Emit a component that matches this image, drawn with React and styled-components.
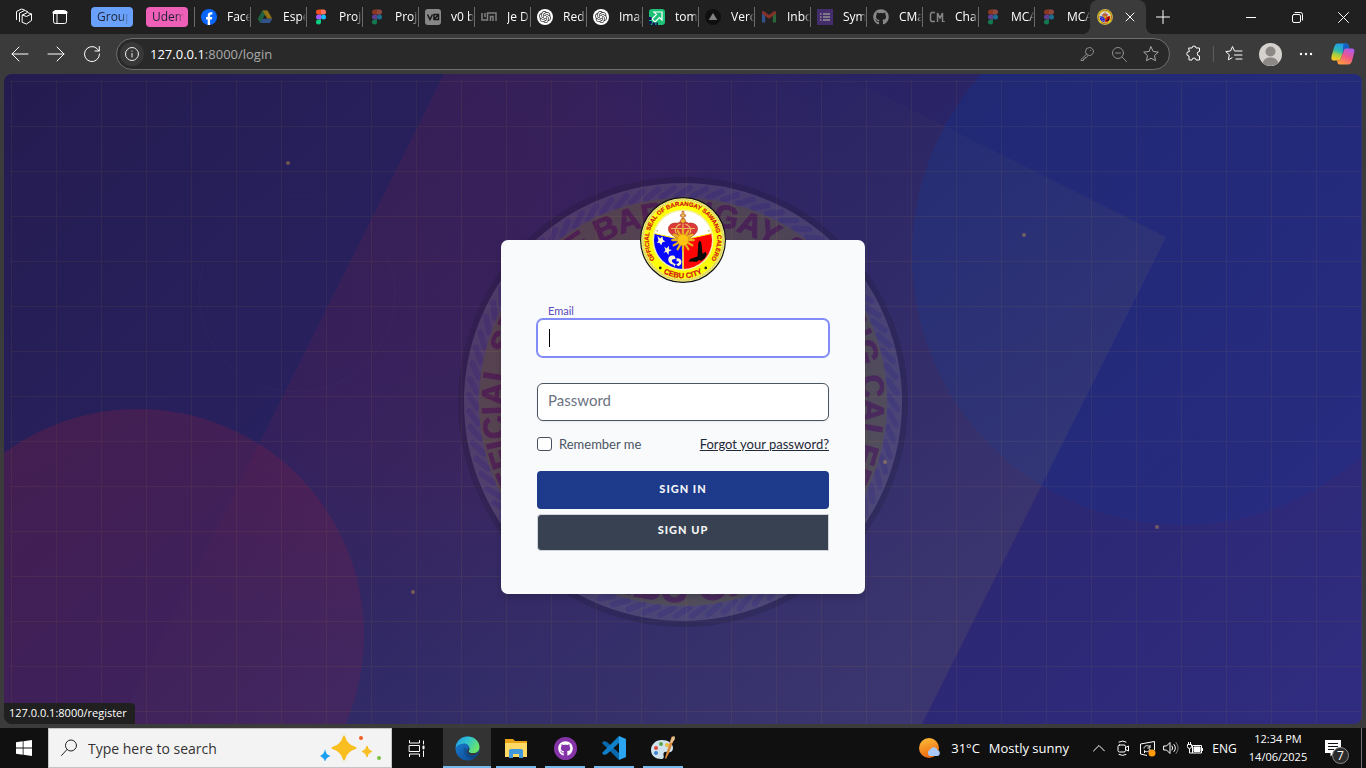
import React, { useId } from "react";
import styled, { createGlobalStyle } from "styled-components";
import { FaGithub } from "react-icons/fa";
import { SiOpenai } from "react-icons/si";

const ui = `"Open Sans", "Noto Sans", sans-serif`;
const brand = `Lato, "Open Sans", sans-serif`;

const GlobalStyle = createGlobalStyle`
  *, *::before, *::after { box-sizing: border-box; }
  body { margin: 0; background: #3b3b3b; font-family: ${ui}; }
  button { font: inherit; color: inherit; border: 0; padding: 0; background: none; cursor: pointer; }
  svg { display: block; flex: none; }
`;

const Desktop = styled.div`
  min-height: 100vh;
  display: flex;
  flex-direction: column;
  background: #3b3b3b;
`;

/* ---------- tab strip ---------- */
const TabStrip = styled.header`
  height: 34px;
  display: flex;
  align-items: center;
  padding-left: 6px;
  background: #202020;
  color: #fff;
  font-size: 12px;
  overflow: hidden;
`;

const IconButton = styled.button`
  width: ${(p) => p.$w || 36}px;
  height: 32px;
  display: flex;
  flex: none;
  align-items: center;
  justify-content: center;
  color: ${(p) => p.$color || "#fff"};
`;

const TabGroup = styled.button`
  width: 42px;
  height: 20px;
  margin-left: 13px;
  padding: 0 4px 0 6px;
  flex: none;
  border-radius: 4px;
  background: ${(p) => p.$bg};
  color: #1d2233;
  text-align: left;
`;

const Fade = styled.span`
  display: block;
  flex: 1;
  min-width: 0;
  overflow: hidden;
  white-space: nowrap;
  line-height: 18px;
  mask-image: linear-gradient(to right, #000 75%, transparent);
`;

const TabList = styled.nav`
  display: flex;
  align-items: center;
  align-self: stretch;
  margin-left: 6px;
`;

const Tab = styled.button`
  width: 56px;
  height: 20px;
  padding-left: 6px;
  display: flex;
  flex: none;
  align-items: center;
  gap: 10px;
  border-left: 1px solid #6b6b6b;
  text-align: left;
`;

const TabIcon = styled.span`
  display: flex;
  flex: none;
  width: 16px;
  height: 16px;
  opacity: ${(p) => (p.$dim ? 0.5 : 1)};
`;

const ActiveTab = styled.div`
  position: relative;
  width: 56px;
  align-self: stretch;
  display: flex;
  flex: none;
  align-items: center;
  gap: 10px;
  padding-left: 7px;
  border-radius: 8px 8px 0 0;
  background: #3b3b3b;
  &::before, &::after {
    content: "";
    position: absolute;
    bottom: 0;
    width: 8px;
    height: 8px;
  }
  &::before { right: 100%; background: radial-gradient(circle at 0 0, transparent 8px, #3b3b3b 8px); }
  &::after { left: 100%; background: radial-gradient(circle at 100% 0, transparent 8px, #3b3b3b 8px); }
`;

const Grow = styled.div`
  flex: 1;
`;

/* ---------- address bar ---------- */
const Toolbar = styled.div`
  height: 40px;
  display: flex;
  align-items: center;
  padding: 0 4px 0 2px;
  background: #3b3b3b;
`;

const AddressBar = styled.div`
  flex: 1;
  height: 32px;
  margin-left: 6px;
  margin-right: 6px;
  padding-left: 3px;
  padding-right: 2px;
  display: flex;
  align-items: center;
  border: 1px solid #6e6e6e;
  border-radius: 16px;
  background: #292929;
`;

const SiteInfo = styled.button`
  width: 24px;
  height: 24px;
  flex: none;
  display: flex;
  align-items: center;
  justify-content: center;
  border-radius: 12px;
  background: #383838;
  color: #eee;
`;

const Url = styled.div`
  flex: 1;
  padding-left: 6px;
  font-size: 13px;
  line-height: 20px;
  color: #a9a9a9;
  b { font-weight: 400; color: #fff; }
`;

const Rule = styled.span`
  width: 1px;
  height: 16px;
  margin: 0 2px 0 1px;
  background: #5c5c5c;
`;

/* ---------- page ---------- */
const Stage = styled.main`
  position: relative;
  flex: 1;
  display: flex;
  align-items: center;
  justify-content: center;
  margin: 0 4px 4px;
  padding: 20px 16px 28px;
  border-radius: 8px;
  overflow: hidden;
  background: linear-gradient(135deg, #241c50, #302c80);
`;

const Backdrop = styled.svg`
  position: absolute;
  inset: 0;
  width: 100%;
  height: 100%;
`;

const LoginPanel = styled.div`
  position: relative;
  width: 364px;
  display: flex;
  flex-direction: column;
  align-items: center;
`;

const SealSlot = styled.div`
  position: relative;
  z-index: 1;
  margin-bottom: -43px;
`;

const Card = styled.form`
  width: 100%;
  padding: 63px 36px 43px;
  display: flex;
  flex-direction: column;
  border-radius: 7px;
  background: #f9fafb;
  box-shadow: 0 4px 6px rgba(0, 0, 0, 0.15);
  font-family: ${brand};
`;

const FieldLabel = styled.label`
  padding-left: 11px;
  font-size: 11px;
  line-height: 16px;
  color: #5a4bbd;
`;

const TextField = styled.input`
  width: 100%;
  height: 38px;
  padding: 0 10px 4px;
  border: 1px solid #4b5563;
  border-radius: 6px;
  outline: 0;
  background: #fff;
  font-family: ${brand};
  font-size: 15px;
  color: #111827;
  box-shadow: 0 1px 2px rgba(0, 0, 0, 0.08);
  &::placeholder { color: #6b7280; opacity: 1; }
`;

const ActiveField = styled(TextField)`
  border-color: #818cf8;
  box-shadow: 0 0 0 1px #818cf8;
  margin-bottom: 26px;
  caret-color: transparent;
  background: #fff linear-gradient(#000, #000) 11px 9px / 1px 18px no-repeat;
`;

const OptionsRow = styled.div`
  display: flex;
  align-items: center;
  justify-content: space-between;
  height: 24px;
  margin: 11px 0 15px;
  font-size: 13px;
  color: #4b5563;
`;

const Remember = styled.label`
  display: flex;
  align-items: center;
  gap: 7px;
`;

const TickBox = styled.input`
  appearance: none;
  width: 15px;
  height: 14px;
  margin: 0;
  border: 1px solid #475060;
  border-radius: 3px;
  background: #fff;
`;

const TextLink = styled.a`
  color: #1f2937;
`;

const ActionButton = styled.button`
  height: ${(p) => (p.$secondary ? 37 : 38)}px;
  margin-top: ${(p) => (p.$secondary ? 5 : 0)}px;
  padding-bottom: ${(p) => (p.$secondary ? 5 : 2)}px;
  border: ${(p) => (p.$secondary ? "1px solid #d1d5db" : "0")};
  border-radius: ${(p) => (p.$secondary ? "4px 0 0 4px" : "4px")};
  background: ${(p) => (p.$secondary ? "#374151" : "#1e3a8a")};
  color: #f3f4f6;
  font-size: 11px;
  font-weight: 900;
  letter-spacing: 1px;
  text-transform: uppercase;
`;

const StatusBubble = styled.div`
  position: absolute;
  left: 0;
  bottom: 0;
  width: 131px;
  height: 21px;
  padding-left: 5px;
  border-top-right-radius: 4px;
  background: #202020;
  color: #fff;
  font-size: 11px;
  line-height: 20px;
  white-space: nowrap;
`;

/* ---------- taskbar ---------- */
const Taskbar = styled.footer`
  height: 40px;
  display: flex;
  align-items: center;
  background: #101010;
  color: #fff;
`;

const TaskTile = styled.button`
  position: relative;
  width: 48px;
  height: 40px;
  flex: none;
  display: flex;
  align-items: center;
  justify-content: center;
  background: ${(p) => (p.$active ? "#333" : "transparent")};
  &::after {
    content: "";
    position: absolute;
    bottom: 0;
    left: ${(p) => (p.$active ? 0 : 4)}px;
    right: ${(p) => (p.$active ? 0 : 4)}px;
    height: 2px;
    background: ${(p) => (p.$running ? "#76b9ed" : "transparent")};
  }
`;

const AppRow = styled.div`
  display: flex;
  gap: 1px;
  margin-left: 3px;
`;

const SearchBox = styled.label`
  width: 344px;
  height: 40px;
  flex: none;
  display: flex;
  align-items: center;
  gap: 10px;
  padding: 0 9px 0 11px;
  border: 1px solid #c4c4c4;
  background: #f3f3f3;
  color: #222;
`;

const SearchInput = styled.input`
  flex: 1;
  min-width: 0;
  padding: 0;
  border: 0;
  outline: 0;
  background: none;
  font-family: ${ui};
  font-size: 14px;
  &::placeholder { color: #333; opacity: 1; }
`;

const Weather = styled.button`
  display: flex;
  align-items: center;
  gap: 9px;
  margin-right: 18px;
  font-size: 13px;
  white-space: nowrap;
`;

const TrayText = styled.span`
  width: 35px;
  text-align: center;
  font-size: 12px;
`;

const Clock = styled.time`
  width: 72px;
  text-align: center;
  font-size: 11px;
  line-height: 18px;
`;

const Notifications = styled.button`
  position: relative;
  width: 38px;
  height: 40px;
  display: flex;
  align-items: center;
  justify-content: center;
  margin-right: 9px;
`;

const Badge = styled.span`
  position: absolute;
  left: 18px;
  top: 19px;
  width: 17px;
  height: 17px;
  border: 1px solid #8a8a8a;
  border-radius: 9px;
  background: #2c2c2c;
  font-size: 12px;
  line-height: 15px;
  text-align: center;
`;

const PeekEdge = styled.span`
  width: 5px;
  height: 40px;
  border-left: 1px solid #707070;
`;

/* ---------- drawings ---------- */
const strands = Array.from({ length: 84 }, (_, i) => (i * 360) / 84);

function Seal({ size, rope = "#f3ee8c", stripe = "#dcd450", ...rest }) {
  const id = useId();
  return (
    <svg width={size} height={size} viewBox="-225 -225 450 450" aria-label="Barangay seal" {...rest}>
      <defs>
        <path id={id + "t"} d="M0 179 A179 179 0 0 1 0 -179 A179 179 0 0 1 0 179" />
        <path id={id + "b"} d="M-200 0 A200 200 0 0 0 200 0" />
        <clipPath id={id + "c"}><circle r="152" /></clipPath>
      </defs>
      <circle r="222" fill={rope} stroke="#101010" strokeWidth="6" />
      <g stroke={stripe} strokeWidth="6" strokeLinecap="round">
        {strands.map((a) => (
          <line key={a} x1="-6" y1="-206" x2="7" y2="-214" transform={`rotate(${a})`} />
        ))}
      </g>
      <circle r="204" fill="#ffff0a" />
      <g fontFamily="Liberation Sans, Arial, sans-serif" fontWeight="700" fill="#d01515" stroke="#d01515" strokeWidth="1" textAnchor="middle">
        <text fontSize="32"><textPath href={"#" + id + "t"} startOffset="50%">OFFICIAL SEAL OF BARANGAY SAWANG CALERO</textPath></text>
        <text fontSize="40"><textPath href={"#" + id + "b"} startOffset="50%">CEBU CITY</textPath></text>
      </g>
      <circle cx="-119" cy="146" r="7" fill="#222" />
      <circle cx="119" cy="146" r="7" fill="#222" />
      <circle r="160" fill="#f4f0a0" />
      <circle r="152" fill="#fff" />
      <g clipPath={`url(#${id}c)`}>
        <path d="M-160 -36 L-3 0 V160 H-160Z" fill="#0808ff" />
        <path d="M160 -36 L3 0 V160 H160Z" fill="#ff0505" />
        <path d="M-160 -36 L0 0 L160 -36 M0 0 V160" fill="none" stroke="#ffe600" strokeWidth="6" />
        <path d="M28 112 L40 98 L76 86 L80 14 L88 2 L96 14 L102 72 L118 62 L124 76 L114 96 L98 108 L84 104 L72 114Z" fill="#0a0a0a" />
        <g fill="#fff8c8">
          <path d="M-134 -22 L-120 -8 L-108 -18 L-104 0 L-92 8 L-108 12 L-114 28 L-124 14 L-136 16 L-128 2Z" />
          <path d="M-98 34 L-86 44 L-74 30 L-74 48 L-58 52 L-74 60 L-76 78 L-88 62 L-102 68 L-92 54Z" />
          <path d="M-44 84 C-84 70 -90 124 -50 130 L-46 140 L-38 126 C-64 120 -66 96 -38 100Z" />
          <path d="M-34 96 C-2 92 0 130 -26 138 L-36 126 C-16 122 -16 110 -34 112Z" />
        </g>
      </g>
      <g stroke="#a3301c" strokeWidth="3">
        <path d="M-44 -18 C-100 -48 -76 -96 -28 -88 C-14 -100 14 -100 28 -88 C76 -96 100 -48 44 -18Z" fill="#dc3a3a" />
        <path d="M-26 -22 C-54 -50 -36 -76 -12 -84 M26 -22 C54 -50 36 -76 12 -84 M0 -22 V-88 M-62 -60 H62" fill="none" stroke="#e8b860" strokeWidth="6" />
        <path d="M-46 -34 Q0 -14 46 -34 L40 -12 Q0 6 -40 -12Z" fill="#eab82c" />
        <circle cy="-100" r="13" fill="#f0b72a" />
        <path d="M-5 -112 V-124 H-14 V-132 H-5 V-150 H5 V-132 H14 V-124 H5 V-112Z" fill="#f0c84a" />
      </g>
      <g stroke="#e8b020" strokeWidth="12" strokeLinecap="round">
        {[0, 30, 60, 90, 120, 150, 180, 210, 240, 270, 300, 330].map((a) => (
          <line key={a} x1="0" y1="-28" x2="0" y2="-56" transform={`rotate(${a})`} />
        ))}
      </g>
      <circle r="30" fill="#ffc313" stroke="#d98f10" strokeWidth="3" />
      <circle cx="-135" cy="-48" r="5" fill="#c9c27a" />
      <circle cx="135" cy="-48" r="5" fill="#c9c27a" />
    </svg>
  );
}

function PageArt() {
  return (
    <Backdrop viewBox="0 0 1358 650" preserveAspectRatio="xMidYMid slice" aria-hidden="true">
      <defs>
        <radialGradient id="bandRed" gradientUnits="userSpaceOnUse" cx="430" cy="180" r="420">
          <stop offset="0" stopColor="#a01c38" stopOpacity=".14" />
          <stop offset=".5" stopColor="#a01c40" stopOpacity=".12" />
          <stop offset="1" stopColor="#902050" stopOpacity="0" />
        </radialGradient>
        <linearGradient id="bandGold" gradientUnits="userSpaceOnUse" x1="680" y1="50" x2="1020" y2="500">
          <stop offset="0" stopColor="#c8b840" stopOpacity="0" />
          <stop offset="1" stopColor="#c8b840" stopOpacity=".09" />
        </linearGradient>
        <linearGradient id="ruby" x1="0" y1="0" x2=".6" y2="1">
          <stop offset="0" stopColor="#b01c30" stopOpacity=".22" />
          <stop offset="1" stopColor="#901848" stopOpacity=".18" />
        </linearGradient>
        <linearGradient id="azure" x1="0" y1="0" x2=".8" y2="1">
          <stop offset="0" stopColor="#0a3898" stopOpacity=".3" />
          <stop offset="1" stopColor="#0a329c" stopOpacity=".18" />
        </linearGradient>
        <pattern id="grid" x="7" y="7" width="45" height="45" patternUnits="userSpaceOnUse">
          <path d="M45 0 H0 V45" fill="none" stroke="#facc15" strokeOpacity=".06" strokeWidth="2" />
        </pattern>
      </defs>
      <circle cx="1178" cy="181" r="270" fill="url(#azure)" />
      <path d="M440 0 H836 L1162 163 L918 650 H115Z" fill="url(#bandRed)" />
      <path d="M440 0 H836 L1162 163 L918 650 H115Z" fill="url(#bandGold)" />
      <circle cx="134" cy="561" r="226" fill="url(#ruby)" />
      <circle cx="293" cy="220" r="98" fill="none" stroke="#6a5a80" strokeOpacity=".08" />
      <rect x="6" y="6" width="1352" height="644" fill="url(#grid)" />
      <Seal size={450} x="454" y="103" rope="#d8d4c0" stripe="#9c94d8" opacity=".14" />
      <g fill="#d9a84a" fillOpacity=".4">
        <circle cx="284" cy="89" r="2" />
        <circle cx="1020" cy="161" r="2" />
        <circle cx="881" cy="388" r="2" />
        <circle cx="1153" cy="453" r="2" />
        <circle cx="409" cy="518" r="2" />
      </g>
    </Backdrop>
  );
}

const Line = ({ size = 16, w = 1, children, box = 16 }) => (
  <svg width={size} height={size} viewBox={`0 0 ${box} ${box}`} fill="none" stroke="currentColor" strokeWidth={w} strokeLinecap="round" strokeLinejoin="round">
    {children}
  </svg>
);

const FacebookIcon = () => (
  <svg width="16" height="16" viewBox="0 0 16 16"><circle cx="8" cy="8" r="8" fill="#0866ff" /><path d="M6.700 16V10.400H5V8h1.700V6.900C6.700 4.300 7.900 3.200 10 3.200c.5 0 1 .05 1.400.15v2.150h-.9c-1 0-1.400.5-1.400 1.500V8h2.200l-.4 2.400H9.100V16z" fill="#fff" /></svg>
);
const DriveIcon = () => (
  <svg width="16" height="16" viewBox="0 0 16 16"><path d="M5.500 1.500h5L8 5.800 3.200 14 .7 9.700z" fill="#1ea362" /><path d="M5.500 1.500h5l4.800 8.200h-5z" fill="#ffc107" /><path d="M5.600 9.700h9.700L12.800 14H3.200z" fill="#4285f4" /></svg>
);
const FigmaIcon = () => (
  <svg width="16" height="16" viewBox="0 0 16 16"><path d="M8 .5H5.500a2.500 2.500 0 0 0 0 5H8z" fill="#f24e1e" /><path d="M8 .5h2.500a2.500 2.500 0 0 1 0 5H8z" fill="#ff7262" /><path d="M8 5.500H5.500a2.500 2.500 0 0 0 0 5H8z" fill="#a259ff" /><circle cx="10.500" cy="8" r="2.500" fill="#1abcfe" /><path d="M8 10.500H5.500A2.500 2.500 0 1 0 8 13z" fill="#0acf83" /></svg>
);
const V0Icon = () => (
  <svg width="16" height="16" viewBox="0 0 16 16"><rect width="16" height="16" rx="3" fill="#eee" /><path d="M2.500 5.500 5 10.500 7.500 5.500M9 5.500h4.500v5H9zM9 10.500l4.500-5" fill="none" stroke="#111" strokeWidth="1.500" /></svg>
);
const MazeIcon = () => (
  <svg width="16" height="16" viewBox="0 0 16 16"><path d="M1 4v7h5.500V4h8.500v8M4 4v4M9.500 12V7.500H12V12" fill="none" stroke="#ddd" strokeWidth="1.500" /></svg>
);
const OpenAiIcon = () => (
  <svg width="16" height="16" viewBox="0 0 16 16"><circle cx="8" cy="8" r="8" fill="#fff" /><SiOpenai x="2" y="2" size={12} color="#333" /></svg>
);
const TomaIcon = () => (
  <svg width="16" height="16" viewBox="0 0 16 16"><rect width="16" height="16" rx="3" fill="#1cc077" /><path d="M5 3h8v8l-2.500-2.500L6 13l-3-3 4.500-4.500z" fill="#1cc077" stroke="#fff" strokeWidth="1.200" /><path d="M1 8v4a3 3 0 0 0 3 3h5" fill="none" stroke="#10105e" strokeWidth="3" strokeDasharray="3 1" /></svg>
);
const VercelIcon = () => (
  <svg width="16" height="16" viewBox="0 0 16 16"><circle cx="8" cy="8" r="8" fill="#000" /><path d="M8 4l4.300 7H3.700z" fill="#ddd" /></svg>
);
const GmailIcon = () => (
  <svg width="16" height="16" viewBox="0 0 16 16"><path d="M1 13.500V4l3.200 2.400v7.100z" fill="#4285f4" /><path d="M11.800 13.500V6.400L15 4v9.500z" fill="#34a853" /><path d="M1 4.500V3.600c0-1.300 1.400-1.900 2.300-1.200L8 6l4.700-3.600c.9-.7 2.300-.1 2.300 1.200v.9L8 9.800z" fill="#ea4335" /></svg>
);
const ListIcon = () => (
  <svg width="16" height="16" viewBox="0 0 16 16"><rect width="16" height="16" fill="#673ab7" /><path d="M3 5h1.500M3 8h1.500M3 11h1.500M6 5h7M6 8h7M6 11h7" stroke="#fff" strokeWidth="1.500" /></svg>
);
const CmIcon = () => (
  <svg width="16" height="16" viewBox="0 0 16 16"><path d="M6 3.500H2.500L1.500 5v6l1 1.500H6M8.500 13V4l2.500 5 2.500-5v9M15 12v1" fill="none" stroke="#e8e8e8" strokeWidth="1.500" /></svg>
);

const tabs = [
  ["Facebook", FacebookIcon, false],
  ["Especial", DriveIcon, true],
  ["Project", FigmaIcon, false],
  ["Project", FigmaIcon, true],
  ["v0 by V", V0Icon, true],
  ["Je Doc", MazeIcon, true],
  ["Reduce", OpenAiIcon, false],
  ["Image", OpenAiIcon, false],
  ["toma", TomaIcon, false],
  ["Vercel", VercelIcon, true],
  ["Inbox", GmailIcon, true],
  ["Sym", ListIcon, true],
  ["CMa", () => <FaGithub size={16} color="#eee" />, true],
  ["Chan", CmIcon, true],
  ["MCA", FigmaIcon, true],
  ["MCA", FigmaIcon, true],
];

const EdgeIcon = () => (
  <svg width="25" height="25" viewBox="0 0 25 25">
    <defs>
      <linearGradient id="eA" x1="0" y1="0" x2="1" y2=".5"><stop offset="0" stopColor="#2299e0" /><stop offset=".5" stopColor="#2fc3d0" /><stop offset="1" stopColor="#6be36a" /></linearGradient>
      <linearGradient id="eB" x1="0" y1="0" x2="1" y2="1"><stop offset="0" stopColor="#1a85d8" /><stop offset="1" stopColor="#0c3f87" /></linearGradient>
    </defs>
    <circle cx="12.500" cy="12.500" r="12" fill="url(#eB)" />
    <path d="M.6 11.500C1.500 5 6.500.5 12.500.5c7 0 12 5 12 10.500 0 4.300-3 6.300-6.500 6.300-3.200 0-4.500-1.300-4.500-2.100 0-.7 1-1.200 1-3 0-2.400-2.200-4.700-5.600-4.700-4 0-7 2.300-8.300 4z" fill="url(#eA)" />
    <path d="M9.500 11.500c-2.500 4.500.5 10.500 7 10.500 2.500 0 4.700-1 6-2-1 .2-9 1-9-5z" fill="#101a2c" fillOpacity=".2" />
    <path d="M13.500 15.200c0 .8 1.300 2.100 4.500 2.100 2.300 0 4.300-.8 5.500-2.400-.8 2.600-2.800 4.200-5.500 4.400-4 .2-6-3-5.500-5.600.5-1.500 2-1.500 2-1.500 0 1.800-1 2.300-1 3z" fill="#333" />
  </svg>
);
const FolderIcon = () => (
  <svg width="22" height="20" viewBox="0 0 22 20"><path d="M0 1h8l2 2h12v16H0z" fill="#e8a317" /><path d="M0 5h22v14H0z" fill="#ffd966" /><path d="M4 20v-7c0-1 .6-2 2-2h10c1.400 0 2 1 2 2v7h-4v-4H8v4z" fill="#3f97dc" /></svg>
);
const GithubDesktopIcon = () => (
  <svg width="23" height="23" viewBox="0 0 23 23"><circle cx="11.500" cy="11.500" r="11.500" fill="#8534a8" /><FaGithub x="4" y="4" size={15} color="#fff" /></svg>
);
const VscodeIcon = () => (
  <svg width="24" height="24" viewBox="0 0 24 24"><path d="M0 7l2-2 3 1 13 12-1 6z" fill="#0969ac" /><path d="M17 0l1 6L5 18l-3 1-2-2z" fill="#0f7fc9" /><path d="M17 0l7 3v18l-7 3z" fill="#2ca5f0" /></svg>
);
const PaintIcon = () => (
  <svg width="26" height="26" viewBox="0 0 26 26"><path d="M12 5C5 5 1 10 1 15c0 6 5 9 10 9 3 0 3-2 2.500-4C13 17 15 16 18 17c3 .8 5-1 5-4 0-5-5-8-11-8z" fill="#cfe3ee" /><circle cx="6" cy="13" r="2" fill="#e2473a" /><circle cx="11" cy="9" r="2" fill="#5aa84a" /><circle cx="17" cy="10" r="2" fill="#f0b932" /><circle cx="6" cy="18" r="2" fill="#3d82d0" /><path d="M22 1l2 3-5 14-3 6-1-1 2-7z" fill="#d9893c" /><path d="M20 7l2-5 2.500-1 .5 3-3 4z" fill="#e8c08c" /></svg>
);
const CopilotIcon = () => (
  <svg width="24" height="22" viewBox="0 0 24 22">
    <defs>
      <linearGradient id="cA" x1=".6" y1="0" x2=".3" y2="1"><stop offset="0" stopColor="#1c9cf0" /><stop offset=".45" stopColor="#2fb8b0" /><stop offset=".7" stopColor="#a8d040" /><stop offset="1" stopColor="#ffc81e" /></linearGradient>
      <linearGradient id="cB" x1=".8" y1="0" x2=".3" y2="1"><stop offset="0" stopColor="#a95af0" /><stop offset=".5" stopColor="#f0568a" /><stop offset="1" stopColor="#ff9a3c" /></linearGradient>
    </defs>
    <path d="M7 .5h8c2 0 2.700 1.500 3.300 5h-2.800c-2 0-2.500 1-3 2.500l-2.700 7.500c-.5 1.300-1.300 2-3.200 2H3C.5 17.500 0 15.500.6 13L3.200 4C4 1.500 5 .5 7 .5z" fill="url(#cA)" />
    <path d="M12.500.5H15c2 0 2.700 1.500 3.300 5h-2.800c-2 0-2.500 1-3 2.500l-1 2.500z" fill="#1460c4" />
    <path d="M17 21.500H9c-1.800 0-2.500-1-3-4 2.500 0 3.500-.8 4-2.500l2.700-7c.6-2 1.300-2.500 2.800-2.500h5c2.800 0 3.300 2 2.700 4L21 18c-.6 2.300-1.800 3.500-4 3.500z" fill="url(#cB)" />
  </svg>
);

const star = "M9 1.800l2.200 4.700 5.100.6-3.800 3.500 1 5.100L9 13.200l-4.500 2.500 1-5.100L1.700 7.100l5.100-.6z";

const runningApps = [
  ["Browser", EdgeIcon],
  ["File Explorer", FolderIcon],
  ["GitHub Desktop", GithubDesktopIcon],
  ["Code editor", VscodeIcon],
  ["Paint", PaintIcon],
];

export default function App() {
  return (
    <Desktop>
      <GlobalStyle />
      <TabStrip>
        <IconButton aria-label="Workspaces">
          <Line size={18} box={18}><path d="M7.500 7l5-2.500L16.500 6v6.500l-5 3.500-4-1.500zM7.500 7l4 1.500 5-2.500M4.500 13.500V5l5-2.500 3 1M1.500 11.500V3.500L6.500 1l3 1" /></Line>
        </IconButton>
        <IconButton aria-label="Tab actions">
          <Line size={16}><rect x="1.500" y="1.500" width="13" height="13" rx="2" /><path d="M2 3.500h12" strokeWidth="3" /><path d="M5 5v9" /></Line>
        </IconButton>
        <TabGroup $bg="#69a1fa"><Fade>Group</Fade></TabGroup>
        <TabGroup $bg="#ee5fb7"><Fade>Udemy</Fade></TabGroup>
        <TabList>
          {tabs.map(([name, Icon, dim], i) => (
            <Tab key={i}>
              <TabIcon $dim={dim}><Icon /></TabIcon>
              <Fade>{name}</Fade>
            </Tab>
          ))}
          <ActiveTab>
            <TabIcon><Seal size={16} opacity=".8" /></TabIcon>
            <IconButton $w={14} aria-label="Close tab"><Line size={10} box={10} w={1}><path d="M1 1l8 8M9 1l-8 8" /></Line></IconButton>
          </ActiveTab>
        </TabList>
        <IconButton $w={34} aria-label="New tab"><Line size={14} box={14}><path d="M7 .5v13M.5 7h13" /></Line></IconButton>
        <Grow />
        <IconButton $w={46} aria-label="Minimize"><Line size={10} box={10}><path d="M0 5.500h10" /></Line></IconButton>
        <IconButton $w={46} aria-label="Restore"><Line size={11} box={11}><rect x=".5" y="2.500" width="8" height="8" rx="1.500" /><path d="M3 .5h5.500a2 2 0 0 1 2 2V8" /></Line></IconButton>
        <IconButton $w={46} aria-label="Close"><Line size={11} box={11}><path d="M.5.5l10 10M10.500.5l-10 10" /></Line></IconButton>
      </TabStrip>

      <Toolbar>
        <IconButton aria-label="Back"><Line size={18} box={18}><path d="M17 9H1M8 2L1 9l7 7" /></Line></IconButton>
        <IconButton aria-label="Forward"><Line size={18} box={18}><path d="M1 9h16M10 2l7 7-7 7" /></Line></IconButton>
        <IconButton aria-label="Refresh"><Line size={18} box={18}><path d="M16.500 9A7.500 7.500 0 1 1 14 3.500L16 6M16.300 1.500V6H12" /></Line></IconButton>
        <AddressBar>
          <SiteInfo aria-label="Site information"><Line size={14} box={14}><circle cx="7" cy="7" r="6.500" /><path d="M7 6.500V10M7 4v.2" /></Line></SiteInfo>
          <Url><b>127.0.0.1</b>:8000/login</Url>
          <IconButton $w={32} $color="#8e8e8e" aria-label="Saved passwords"><Line size={14} box={14}><circle cx="9.500" cy="4.500" r="4" /><path d="M6.500 7.200L1 12.500v1h2.500V12H5v-1.500h1.500L8 8.500M10.500 3.500h.1" /></Line></IconButton>
          <IconButton $w={32} $color="#8e8e8e" aria-label="Zoom"><Line size={15} box={15}><circle cx="6" cy="6" r="5.500" /><path d="M10 10l4.500 4.500M3.500 6h5" /></Line></IconButton>
          <IconButton $w={32} $color="#a8a8a8" aria-label="Add to favorites"><Line size={18} box={18}><path d={star} /></Line></IconButton>
        </AddressBar>
        <IconButton aria-label="Extensions"><Line size={18} box={18}><path d="M4 3h3a2 2 0 0 1 4 0h3.500v3.500a2 2 0 1 0 0 4.500v4H11a2 2 0 0 0-4 0H4v-4a2.200 2.200 0 1 1 0-4.500z" /></Line></IconButton>
        <Rule />
        <IconButton aria-label="Favorites"><Line size={18} box={18}><path d="M9.500 6L7.500 1.500 5.500 6 .8 6.600l3.500 3.200-.9 5 3.600-2M10.500 6H17M9.500 10H17M11 14h6" /></Line></IconButton>
        <IconButton aria-label="Profile">
          <svg width="23" height="23" viewBox="0 0 23 23"><circle cx="11.500" cy="11.500" r="11.500" fill="#d5d2ce" /><circle cx="11.500" cy="8.500" r="5" fill="#8b8885" /><path d="M4 20.200c0-7.500 15-7.500 15 0a11.500 11.500 0 0 1-15 0z" fill="#8b8885" /></svg>
        </IconButton>
        <IconButton aria-label="Settings"><svg width="14" height="4" viewBox="0 0 14 4" fill="#fff"><circle cx="2" cy="2" r="1.200" /><circle cx="7" cy="2" r="1.200" /><circle cx="12" cy="2" r="1.200" /></svg></IconButton>
        <IconButton $w={38} aria-label="Copilot"><CopilotIcon /></IconButton>
      </Toolbar>

      <Stage>
        <PageArt />
        <LoginPanel>
          <SealSlot><Seal size={86} /></SealSlot>
          <Card onSubmit={(e) => e.preventDefault()}>
            <FieldLabel htmlFor="email">Email</FieldLabel>
            <ActiveField id="email" type="email" />
            <TextField id="password" type="password" placeholder="Password" aria-label="Password" />
            <OptionsRow>
              <Remember><TickBox type="checkbox" />Remember me</Remember>
              <TextLink href="#forgot">Forgot your password?</TextLink>
            </OptionsRow>
            <ActionButton type="submit">Sign in</ActionButton>
            <ActionButton type="button" $secondary>Sign up</ActionButton>
          </Card>
        </LoginPanel>
        <StatusBubble>127.0.0.1:8000/register</StatusBubble>
      </Stage>

      <Taskbar>
        <TaskTile aria-label="Start">
          <svg width="16" height="16" viewBox="0 0 16 16" fill="#fff"><path d="M0 2.200l6.700-.9v6.300H0zM7.500 1.200L16 0v7.600H7.500zM0 8.400h6.700v6.300L0 13.800zM7.500 8.400H16V16l-8.500-1.200z" /></svg>
        </TaskTile>
        <SearchBox>
          <Line size={18} box={18} w={1}><circle cx="11" cy="6.500" r="5.500" /><path d="M7 10.500L1.500 16.500" /></Line>
          <SearchInput type="text" placeholder="Type here to search" />
          <svg width="62" height="26" viewBox="0 0 62 26">
            <path d="M24 1.500c1.500 6 4.500 9.500 11.500 11.500-7 2-10 5.500-11.500 11.500-1.500-6-4.500-9.500-11.500-11.500C19.500 11 22.500 7.500 24 1.500z" fill="#f9bf22" stroke="#f9bf22" strokeWidth="2" strokeLinejoin="round" />
            <path d="M47 11c.8 3 2.200 4.500 5 5.500-3 1-4.200 2.500-5 5.500-.8-3-2.200-4.500-5-5.500 3-1 4.200-2.500 5-5.500z" fill="#f9bf22" stroke="#f9bf22" />
            <path d="M5 17c.6 2.500 1.500 3.500 3.500 4-2 1-2.900 1.500-3.500 3.500C4.400 22.500 3 22 1.500 21 3.500 20 4.400 19 5 17z" fill="#18a0f0" stroke="#18a0f0" strokeWidth="1.500" />
            <circle cx="41" cy="3" r="2" fill="#f25c22" /><circle cx="59" cy="23" r="2" fill="#7cc043" />
          </svg>
        </SearchBox>
        <TaskTile aria-label="Task view">
          <Line size={17} box={17} w={1}><path d="M1.500.5v2.500h10V.5M1.500 16.500V14h10v2.500" /><rect x="1.500" y="5.500" width="10" height="6" /><path d="M15.500 1v3M15.500 11v5.500" /><path d="M15.500 6.500v2" strokeWidth="2" /></Line>
        </TaskTile>
        <AppRow>
          {runningApps.map(([name, Icon], i) => (
            <TaskTile key={name} $running $active={i === 0} aria-label={name}><Icon /></TaskTile>
          ))}
        </AppRow>
        <Grow />
        <Weather>
          <svg width="23" height="22" viewBox="0 0 23 22"><defs><linearGradient id="sun" x1="0" y1="0" x2=".3" y2="1"><stop offset="0" stopColor="#fcc13a" /><stop offset="1" stopColor="#ee6a12" /></linearGradient></defs><circle cx="10" cy="11" r="10" fill="url(#sun)" /><path d="M11 19a3.500 3.500 0 0 1 .2-6.500 4 4 0 0 1 7.300.5A3.200 3.200 0 0 1 19 19z" fill="#a9c8fa" /></svg>
          <span>31°C</span>
          <span>Mostly sunny</span>
        </Weather>
        <IconButton $w={24} aria-label="Hidden icons"><Line size={12} box={12}><path d="M.5 9L6 3.500 11.500 9" /></Line></IconButton>
        <IconButton $w={24} aria-label="Meet now"><Line size={16}><rect x="3" y="5" width="7.500" height="7" rx="1.500" /><path d="M10.500 7.500L13.500 6v5l-3-1.500M4 2Q8 0 11 2M4 14.500q4 2 7 0" /></Line></IconButton>
        <IconButton $w={24} aria-label="Updates"><svg width="17" height="17" viewBox="0 0 17 17" fill="none" stroke="#fff"><path d="M8 15.500L1.500 14V4l14-2.500V10" /><path d="M5 8.500c0-3 4.500-4 6-1V5M11 8H8.500M11 9c-.5 3-4.500 3.500-5.500 1.500V13" /><circle cx="13" cy="13" r="3.500" fill="#ff9a0a" stroke="none" /></svg></IconButton>
        <IconButton $w={24} aria-label="Volume"><Line size={16}><path d="M1 6h2.500L7 2.500v11L3.500 10H1zM9 6q1.500 2 0 4M11 4.500q3 3.500 0 7" /><path d="M13 2.500q4.500 5.500 0 11" opacity=".45" /></Line></IconButton>
        <IconButton $w={24} aria-label="Battery"><svg width="17" height="14" viewBox="0 0 17 14" fill="none" stroke="#fff"><path d="M5.500 4.500h9v7.500h-9z" /><path d="M7 6h6v4.500H7z" fill="#fff" /><path d="M15.500 7v3M.5 3.500h4v2a2 2 0 0 1-4 0zM1.500 1v2M3.500 1v2M2.500 8v4h3" /></svg></IconButton>
        <TrayText>ENG</TrayText>
        <Clock>12:34 PM<br />14/06/2025</Clock>
        <Notifications aria-label="Notifications">
          <svg width="16" height="17" viewBox="0 0 16 17"><path d="M0 0h16v13H9l-3.500 3.500V13H0z" fill="#fff" /><path d="M3 3.500h10M3 6.500h10M3 9.500h6" stroke="#101010" /></svg>
          <Badge>7</Badge>
        </Notifications>
        <PeekEdge />
      </Taskbar>
    </Desktop>
  );
}
